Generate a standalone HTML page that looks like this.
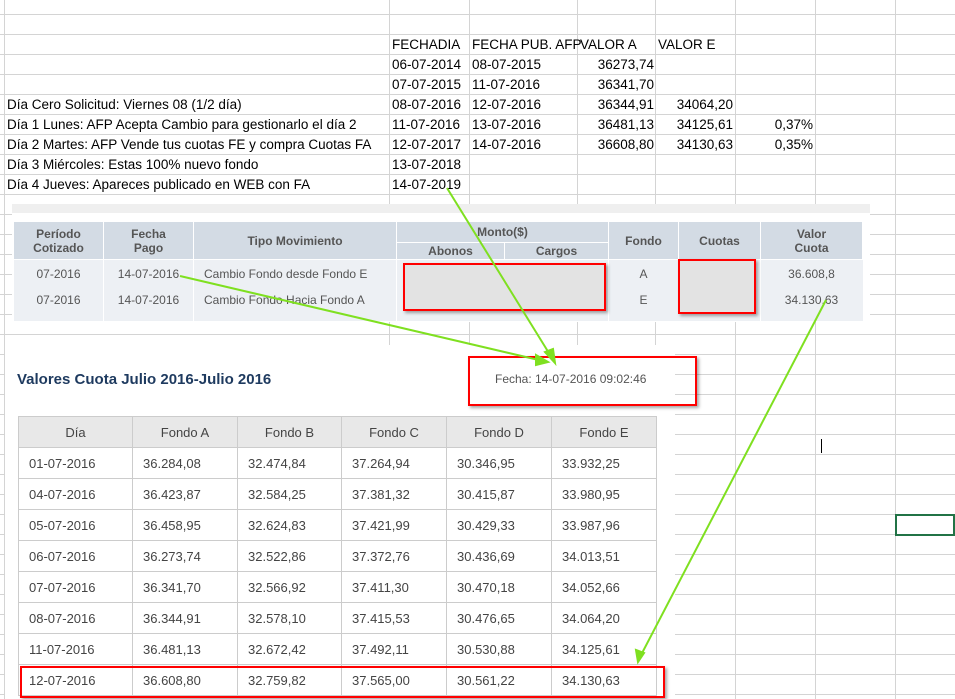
<!DOCTYPE html>
<html><head><meta charset="utf-8"><style>
*{margin:0;padding:0;box-sizing:border-box}
body{width:955px;height:699px;overflow:hidden;position:relative;background:#fff;font-family:"Liberation Sans",sans-serif;
background-image:linear-gradient(#d4d4d4 1px,transparent 1px);
background-size:955px 20px;background-position:0 14px}
.v{position:absolute;top:0;width:1px;height:699px;background:#d4d4d4}
.c{position:absolute;font-size:13.5px;color:#000;height:20px;line-height:20px;white-space:nowrap}
.r{text-align:right}
.abs{position:absolute}
.h{position:absolute;background:#d3dbe4;color:#555;font-size:12px;font-weight:bold;display:flex;align-items:center;justify-content:center;text-align:center;line-height:14px}
.b{position:absolute;font-size:12px;color:#555;text-align:center;line-height:14px}
table{border-collapse:collapse}
.t2 td,.t2 th{border:1px solid #ccc;font-size:13px;color:#444;font-weight:normal;text-align:left;padding-left:10px}
.t2 th{background:#e8e8e8;text-align:center;padding:0}
.red{position:absolute;border:2px solid #f00;box-shadow:2px 2px 3px rgba(0,0,0,.35)}
</style></head><body>
<div class="v" style="left:4px"></div><div class="v" style="left:389px"></div><div class="v" style="left:469px"></div><div class="v" style="left:577px"></div><div class="v" style="left:655px"></div><div class="v" style="left:735px"></div><div class="v" style="left:815px"></div><div class="v" style="left:895px"></div>

<div class="c" style="left:392px;top:35px">FECHADIA</div><div class="c" style="left:472px;top:35px">FECHA PUB. AFP</div><div class="c" style="left:580px;top:35px">VALOR A</div><div class="c" style="left:658px;top:35px">VALOR E</div>
<div class="c" style="left:392px;top:55px">06-07-2014</div><div class="c" style="left:472px;top:55px">08-07-2015</div><div class="c r" style="left:577px;width:77px;top:55px">36273,74</div>
<div class="c" style="left:392px;top:75px">07-07-2015</div><div class="c" style="left:472px;top:75px">11-07-2016</div><div class="c r" style="left:577px;width:77px;top:75px">36341,70</div>
<div class="c" style="left:7px;top:95px">Día Cero Solicitud: Viernes 08 (1/2 día)</div><div class="c" style="left:392px;top:95px">08-07-2016</div><div class="c" style="left:472px;top:95px">12-07-2016</div><div class="c r" style="left:577px;width:77px;top:95px">36344,91</div><div class="c r" style="left:655px;width:78px;top:95px">34064,20</div>
<div class="c" style="left:7px;top:115px">Día 1 Lunes: AFP Acepta Cambio para gestionarlo el día 2</div><div class="c" style="left:392px;top:115px">11-07-2016</div><div class="c" style="left:472px;top:115px">13-07-2016</div><div class="c r" style="left:577px;width:77px;top:115px">36481,13</div><div class="c r" style="left:655px;width:78px;top:115px">34125,61</div><div class="c r" style="left:735px;width:78px;top:115px">0,37%</div>
<div class="c" style="left:7px;top:135px">Día 2 Martes: AFP Vende tus cuotas FE y compra Cuotas FA</div><div class="c" style="left:392px;top:135px">12-07-2017</div><div class="c" style="left:472px;top:135px">14-07-2016</div><div class="c r" style="left:577px;width:77px;top:135px">36608,80</div><div class="c r" style="left:655px;width:78px;top:135px">34130,63</div><div class="c r" style="left:735px;width:78px;top:135px">0,35%</div>
<div class="c" style="left:7px;top:155px">Día 3 Miércoles: Estas 100% nuevo fondo</div><div class="c" style="left:392px;top:155px">13-07-2018</div>
<div class="c" style="left:7px;top:175px">Día 4 Jueves: Apareces publicado en WEB con FA</div><div class="c" style="left:392px;top:175px">14-07-2019</div>

<!-- top panel -->
<div class="abs" style="left:12px;top:204px;width:858px;height:9px;background:#efefef"></div>
<div class="abs" style="left:12px;top:213px;width:858px;height:109px;background:#fff"></div>
<div class="abs" style="left:14px;top:260px;width:849px;height:61px;background:#edf0f4"></div>
<div class="h" style="left:14px;top:222px;width:89px;height:37px">Período<br>Cotizado</div>
<div class="h" style="left:104px;top:222px;width:89px;height:37px">Fecha<br>Pago</div>
<div class="h" style="left:194px;top:222px;width:202px;height:37px">Tipo Movimiento</div>
<div class="h" style="left:397px;top:222px;width:211px;height:20px">Monto($)</div>
<div class="h" style="left:397px;top:243px;width:107px;height:16px">Abonos</div>
<div class="h" style="left:505px;top:243px;width:103px;height:16px">Cargos</div>
<div class="h" style="left:609px;top:222px;width:69px;height:37px">Fondo</div>
<div class="h" style="left:679px;top:222px;width:81px;height:37px">Cuotas</div>
<div class="h" style="left:761px;top:222px;width:101px;height:37px">Valor<br>Cuota</div>
<div class="abs" style="left:103px;top:260px;width:1px;height:61px;background:#fff"></div>
<div class="abs" style="left:193px;top:260px;width:1px;height:61px;background:#fff"></div>
<div class="abs" style="left:396px;top:260px;width:1px;height:61px;background:#fff"></div>
<div class="abs" style="left:608px;top:260px;width:1px;height:61px;background:#fff"></div>
<div class="abs" style="left:760px;top:260px;width:1px;height:61px;background:#fff"></div>
<div class="b" style="left:14px;top:267px;width:89px">07-2016</div>
<div class="b" style="left:104px;top:267px;width:89px">14-07-2016</div>
<div class="b" style="left:204px;top:267px;text-align:left">Cambio Fondo desde Fondo E</div>
<div class="b" style="left:609px;top:267px;width:69px">A</div>
<div class="b" style="left:761px;top:267px;width:101px">36.608,8</div>
<div class="b" style="left:14px;top:293px;width:89px">07-2016</div>
<div class="b" style="left:104px;top:293px;width:89px">14-07-2016</div>
<div class="b" style="left:204px;top:293px;text-align:left">Cambio Fondo Hacia Fondo A</div>
<div class="b" style="left:609px;top:293px;width:69px">E</div>
<div class="b" style="left:761px;top:293px;width:101px">34.130,63</div>
<div class="red" style="left:403px;top:263px;width:203px;height:48px;background:#e3e3e3"></div>
<div class="red" style="left:678px;top:259px;width:78px;height:55px;background:#e3e3e3"></div>

<!-- lower panel -->
<div class="abs" style="left:5px;top:345px;width:670px;height:354px;background:#fff"></div>
<div class="abs" style="left:17px;top:371px;font-size:15px;font-weight:bold;color:#1e3a5f">Valores Cuota Julio 2016-Julio 2016</div>
<div class="red" style="left:468px;top:356px;width:229px;height:50px"></div>
<div class="abs" style="left:495px;top:372px;font-size:12px;color:#555">Fecha: 14-07-2016 09:02:46</div>
<table class="t2 abs" style="left:18px;top:416px;width:639px">
<tr style="height:31px"><th style="width:114px">Día</th><th style="width:105px">Fondo A</th><th style="width:104px">Fondo B</th><th style="width:105px">Fondo C</th><th style="width:105px">Fondo D</th><th>Fondo E</th></tr>
<tr style="height:31px"><td>01-07-2016</td><td>36.284,08</td><td>32.474,84</td><td>37.264,94</td><td>30.346,95</td><td>33.932,25</td></tr>
<tr style="height:31px"><td>04-07-2016</td><td>36.423,87</td><td>32.584,25</td><td>37.381,32</td><td>30.415,87</td><td>33.980,95</td></tr>
<tr style="height:31px"><td>05-07-2016</td><td>36.458,95</td><td>32.624,83</td><td>37.421,99</td><td>30.429,33</td><td>33.987,96</td></tr>
<tr style="height:31px"><td>06-07-2016</td><td>36.273,74</td><td>32.522,86</td><td>37.372,76</td><td>30.436,69</td><td>34.013,51</td></tr>
<tr style="height:31px"><td>07-07-2016</td><td>36.341,70</td><td>32.566,92</td><td>37.411,30</td><td>30.470,18</td><td>34.052,66</td></tr>
<tr style="height:31px"><td>08-07-2016</td><td>36.344,91</td><td>32.578,10</td><td>37.415,53</td><td>30.476,65</td><td>34.064,20</td></tr>
<tr style="height:31px"><td>11-07-2016</td><td>36.481,13</td><td>32.672,42</td><td>37.492,11</td><td>30.530,88</td><td>34.125,61</td></tr>
<tr style="height:31px"><td>12-07-2016</td><td>36.608,80</td><td>32.759,82</td><td>37.565,00</td><td>30.561,22</td><td>34.130,63</td></tr>
</table>
<div class="red" style="left:20px;top:666px;width:645px;height:32px"></div>

<div class="abs" style="left:895px;top:514px;width:60px;height:22px;border:2px solid #217346"></div>
<div class="abs" style="left:821px;top:439px;width:1px;height:14px;background:#000"></div>

<svg class="abs" style="left:0;top:0" width="955" height="699">
<g stroke="#7fe020" stroke-width="2" fill="#7fe020">
<line x1="447" y1="188" x2="552" y2="358"/><polygon points="555,363 545,352 553,349"/>
<line x1="180" y1="276" x2="543" y2="361"/><polygon points="548,362 536,355 536,365"/>
<line x1="826" y1="300" x2="640" y2="657"/><polygon points="638,662 636,650 644,653"/>
</g></svg>
</body></html>
